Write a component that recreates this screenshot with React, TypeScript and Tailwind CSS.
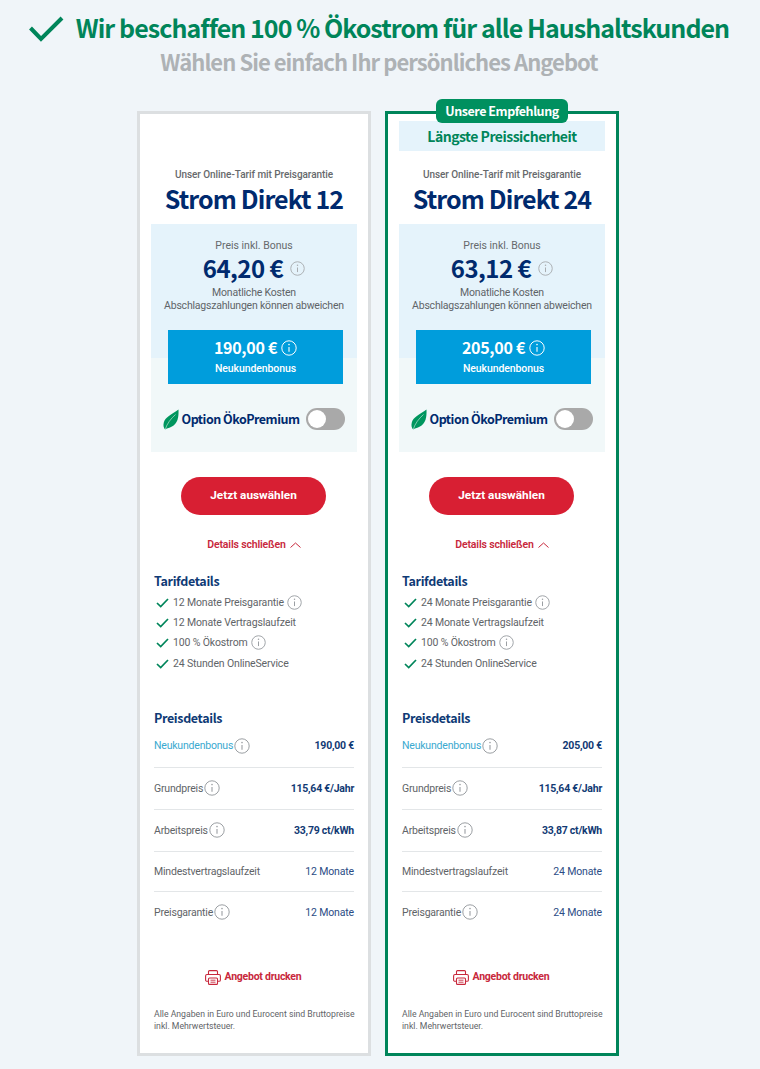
import React from "react";

const heading = "font-['Noto_Sans_CJK_SC','Noto_Sans',sans-serif]";

function Info({ size = 16, color = "#9b9fa3", className = "-mt-[1px]" }: { size?: number; color?: string; className?: string }) {
  return (
    <svg width={size} height={size} viewBox="0 0 16 16" fill="none" className={`shrink-0 ${className}`}>
      <circle cx="8" cy="8" r="7.2" stroke={color} strokeWidth="1" />
      <circle cx="8" cy="4.6" r="0.8" fill={color} />
      <path d="M8 6.9V11.8" stroke={color} strokeWidth="1.1" />
    </svg>
  );
}

function Check() {
  return (
    <svg width="13" height="10" viewBox="0 0 13 10" fill="none" className="mr-[1px] shrink-0">
      <path d="M1 5L4.7 8.6L12 1" stroke="#00855a" strokeWidth="1.7" />
    </svg>
  );
}

function Leaf() {
  return (
    <svg width="16" height="21" viewBox="0 0 16 21" className="shrink-0">
      <path d="M15.5 0.5C15.8 8 15 15 8 18C5.8 19 3.5 19.5 2.2 20.5C0.6 19 0 16.5 0.8 13.5C2.2 8 9 5 15.5 0.5Z" fill="#00965e" />
      <path d="M2.2 20.5C4 14.5 8 9.5 12.5 5.5" stroke="#ffffff" strokeWidth="0.5" fill="none" />
    </svg>
  );
}

function Printer() {
  return (
    <svg width="16" height="15" viewBox="0 0 16 15" fill="none" className="shrink-0">
      <path d="M3.5 4.5V1.6C3.5 1 4 .6 4.6 .6H11.4C12 .6 12.5 1 12.5 1.6V4.5" stroke="#c8283c" strokeWidth="1.1" />
      <path d="M3.5 11.3H2C1.2 11.3 .6 10.7 .6 9.9V5.9C.6 5.1 1.2 4.5 2 4.5H14C14.8 4.5 15.4 5.1 15.4 5.9V9.9C15.4 10.7 14.8 11.3 14 11.3H12.5" stroke="#c8283c" strokeWidth="1.1" />
      <rect x="3.5" y="8" width="9" height="6.4" rx="1" stroke="#c8283c" strokeWidth="1.1" />
      <path d="M5.5 10.2H10.5M5.5 12.2H10.5" stroke="#c8283c" strokeWidth="0.9" />
    </svg>
  );
}

function PriceRow({ label, value, info, bold, labelClass, height, border = true }: { label: string; value: string; info?: boolean; bold?: boolean; labelClass?: string; height: string; border?: boolean }) {
  return (
    <div className={`flex items-center justify-between ${height} ${border ? "border-b border-[#e3e6e8]" : ""}`}>
      <span className={`flex items-center gap-px text-[10.5px] tracking-[-0.2px] ${labelClass ?? "text-[#5f6468]"}`}>
        {label}
        {info && <Info />}
      </span>
      <span className={`text-[10.5px] ${bold ? "font-bold tracking-[-0.24px] text-[#123a74]" : "tracking-[-0.15px] text-[#2b4c85]"}`}>{value}</span>
    </div>
  );
}

type Plan = { name: string; price: string; bonus: string; months: string; work: string; recommended?: boolean };

function Card({ name, price, bonus, months, work, recommended }: Plan) {
  return (
    <div className={`relative h-[945px] w-[234px] border-[3px] bg-white px-[11px] font-['Roboto',sans-serif] ${recommended ? "border-[#00855a]" : "border-[#dcdfe1]"}`}>
      {recommended && (
        <div className={`absolute left-[48px] top-[-15px] flex h-[24px] w-[132px] items-center justify-center rounded-[6px] bg-[#00905f] text-[12.5px] font-bold tracking-[-0.45px] text-white ${heading}`}>
          Unsere Empfehlung
        </div>
      )}
      <div className={`mt-[7px] flex h-[30px] items-center justify-center text-[14px] font-bold tracking-[-0.5px] ${heading} ${recommended ? "bg-[#e5f3fb] text-[#00855a]" : ""}`}>
        {recommended ? "Längste Preissicherheit" : ""}
      </div>
      <div className="mt-[16px] text-center text-[10px] font-medium leading-[16px] tracking-[-0.05px] text-[#66696c]">Unser Online-Tarif mit Preisgarantie</div>
      <div className={`-mt-[3px] text-center text-[25px] font-bold leading-[36px] tracking-[-0.9px] text-[#002a6e] ${heading}`}>{name}</div>
      <div className="mt-[8px] flex h-[228px] flex-col items-center bg-[linear-gradient(#e5f3fb_0,#e5f3fb_134px,#f1f8f9_134px,#f1f8f9_100%)]">
        <div className="mt-[15px] text-[10.5px] leading-[14px] text-[#66696c]">Preis inkl. Bonus</div>
        <div className="-mt-[1px] flex items-center gap-[7px]">
          <span className={`text-[24px] font-bold leading-[31px] tracking-[-0.5px] text-[#002a6e] ${heading}`}>{price}</span>
          <Info size={15} color="#a9adb0" className="mt-[2px]" />
        </div>
        <div className="mt-[3px] text-center text-[10.5px] leading-[13px] tracking-[-0.2px] text-[#5f6468]">
          Monatliche Kosten
          <br />
          Abschlagszahlungen können abweichen
        </div>
        <div className="ml-[17px] mt-[18px] flex h-[54px] w-[175px] flex-col items-center self-start bg-[#009ddc] text-white">
          <div className="mt-[6px] flex items-center gap-[4px]">
            <span className={`text-[16px] font-bold leading-[22px] tracking-[-0.3px] ${heading}`}>{bonus}</span>
            <Info color="#ffffff" className="mt-[2px]" />
          </div>
          <div className="mt-[3px] text-[10.5px] font-medium leading-[15px] tracking-[-0.1px]">Neukundenbonus</div>
        </div>
        <div className="mt-[24px] flex items-center">
          <Leaf />
          <span className={`ml-[3px] text-[12.5px] font-bold tracking-[-0.5px] text-[#002a6e] ${heading}`}>Option ÖkoPremium</span>
          <span className="ml-[7px] flex h-[22px] w-[39px] items-center rounded-full bg-[#a9a9a9] pl-[2px]">
            <span className="h-[18px] w-[18px] rounded-full bg-white" />
          </span>
        </div>
      </div>
      <div className="mt-[25px] pl-[30px]">
        <div className="flex h-[38px] w-[145px] items-center justify-center rounded-full bg-[#d81f33] text-[11.8px] font-bold text-white">Jetzt auswählen</div>
      </div>
      <div className="mt-[22px] flex items-center justify-center gap-[4px] text-[10.5px] font-semibold leading-[16px] tracking-[-0.15px] text-[#c8283c]">
        Details schließen
        <svg width="11" height="6" viewBox="0 0 11 6" fill="none"><path d="M.5 5.5L5.5 1L10.5 5.5" stroke="#c8283c" strokeWidth="1" /></svg>
      </div>
      <div className={`mt-[19px] pl-[3px] text-[12.5px] font-bold leading-[18px] tracking-[-0.35px] text-[#0f3a75] ${heading}`}>Tarifdetails</div>
      <ul className="mt-[3px] pl-[5px] text-[10.5px] tracking-[-0.15px] text-[#5f6468]">
        <li className="flex h-[20px] items-center gap-[3px]"><Check />{months} Monate Preisgarantie<Info size={15} /></li>
        <li className="flex h-[20px] items-center gap-[3px]"><Check />{months} Monate Vertragslaufzeit</li>
        <li className="flex h-[20px] items-center gap-[3px]"><Check />100 % Ökostrom<Info size={15} /></li>
        <li className="flex h-[21px] items-center gap-[3px]"><Check />24 Stunden OnlineService</li>
      </ul>
      <div className={`mt-[35px] pl-[3px] text-[12.5px] font-bold leading-[18px] tracking-[-0.35px] text-[#0f3a75] ${heading}`}>Preisdetails</div>
      <div className="mx-[3px]">
        <PriceRow label="Neukundenbonus" value={bonus} info bold labelClass="text-[#3aa9cf]" height="h-[41px] pb-[2px]" />
        <PriceRow label="Grundpreis" value="115,64 €/Jahr" info bold height="h-[42px]" />
        <PriceRow label="Arbeitspreis" value={work} info bold height="h-[42px]" />
        <PriceRow label="Mindestvertragslaufzeit" value={`${months} Monate`} height="h-[40px]" />
        <PriceRow label="Preisgarantie" value={`${months} Monate`} info height="h-[41px]" border={false} />
      </div>
      <div className="mt-[36px] flex items-center justify-center gap-[4px] pr-[2px] text-[10.5px] font-bold leading-[16px] tracking-[-0.25px] text-[#c8283c]">
        <Printer />
        Angebot drucken
      </div>
      <p className="mt-[24px] pl-[3px] text-[8.7px] leading-[11.5px] text-[#5f6468]">
        Alle Angaben in Euro und Eurocent sind Bruttopreise inkl. Mehrwertsteuer.
      </p>
    </div>
  );
}

export default function App() {
  return (
    <div className="h-[1069px] w-[760px] overflow-hidden bg-[#f0f5f9]">
      <div className={`flex items-center justify-center gap-[12px] pr-[2px] pt-[9px] ${heading}`}>
        <svg width="35" height="26" viewBox="0 0 35 26" fill="none" className="mt-[4px] shrink-0">
          <path d="M1.5 12L12 23L33 2" stroke="#00855a" strokeWidth="4" />
        </svg>
        <h1 className="whitespace-nowrap text-[25px] font-bold leading-[36px] tracking-[-0.95px] text-[#00855a]">Wir beschaffen 100 % Ökostrom für alle Haushaltskunden</h1>
      </div>
      <h2 className={`-mt-[1px] pr-[2px] text-center text-[22px] font-semibold leading-[34px] tracking-[-0.95px] text-[#aeb2b5] ${heading}`}>Wählen Sie einfach Ihr persönliches Angebot</h2>
      <div className="mt-[33px] flex justify-center gap-[14px] pr-[4px]">
        <Card name="Strom Direkt 12" price="64,20 €" bonus="190,00 €" months="12" work="33,79 ct/kWh" />
        <Card name="Strom Direkt 24" price="63,12 €" bonus="205,00 €" months="24" work="33,87 ct/kWh" recommended />
      </div>
    </div>
  );
}
